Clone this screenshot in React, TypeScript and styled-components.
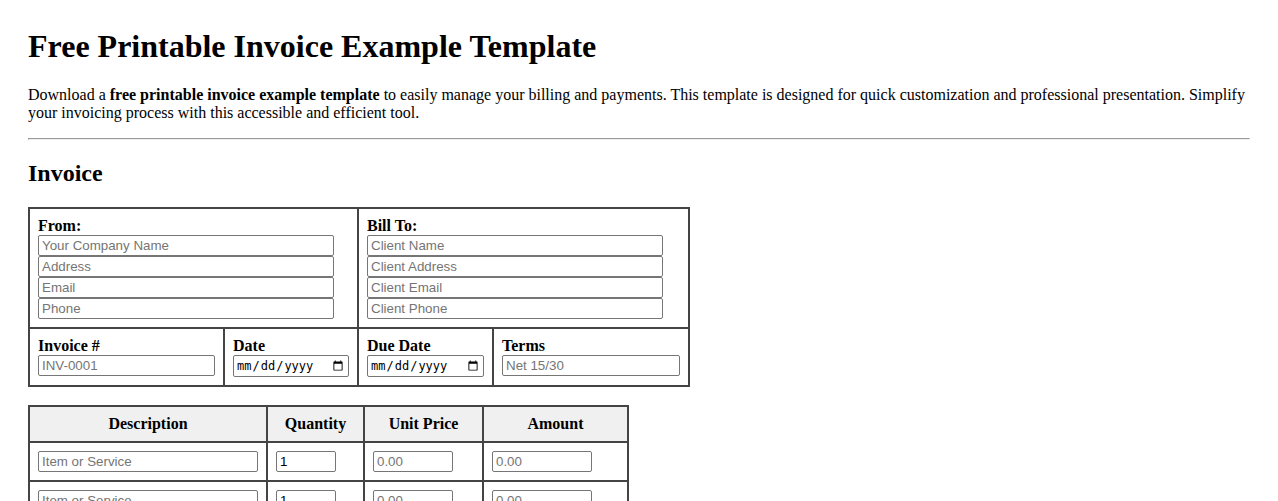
import styled, { createGlobalStyle } from "styled-components";

const GlobalStyle = createGlobalStyle`
body {
  margin: 8px;
  font-family: "Liberation Serif", "Times New Roman", serif;
  color: #000;
  background: #fff;
}
`

const Page = styled.div`
padding: 20px;
`

const Title = styled.h1`
margin: 0 0 21px;
font-size: 32px;
`

const Intro = styled.p`
margin: 0 0 16px;
font-size: 16px;
`

const Rule = styled.hr`
margin: 0;
`

const Heading = styled.h2`
margin: 20px 0;
font-size: 24px;
`

const Grid = styled.table<{ $width: number }>`
width: ${p => p.$width}px;
table-layout: fixed;
border-collapse: collapse;
border: 2px solid #444;
margin-bottom: 18px;
`

const Cell = styled.td`
border: 2px solid #444;
padding: 8px;
vertical-align: top;
text-align: left;
`

const HeadCell = styled.th`
border: 2px solid #444;
padding: 8px;
background: #f0f0f0;
font-weight: bold;
text-align: center;
`

const Label = styled.div`
font-weight: bold;
font-size: 16px;
`

const Field = styled.input<{ $width?: number }>`
display: block;
box-sizing: border-box;
width: ${p => (p.$width ? `${p.$width}px` : "100%")};
height: 21px;
margin: 0;
padding: 1px 3px;
border: 1px solid #767676;
border-radius: 2px;
font-family: "Liberation Sans", Arial, sans-serif;
font-size: 13.33px;
color: #000;
&::placeholder {
  color: #757575;
}
`

const DateField = styled(Field)`
font-family: "DejaVu Sans Mono", "Liberation Mono", monospace;
font-size: 12px;
height: 22px;
padding: 1px 2px;
`

type Party = { label: string; fields: string[] };

const parties: Party[] = [
  { label: "From:", fields: ["Your Company Name", "Address", "Email", "Phone"] },
  { label: "Bill To:", fields: ["Client Name", "Client Address", "Client Email", "Client Phone"] },
];

const items = [1, 2, 3];

const App = () => {
  return (
    <Page>
      <GlobalStyle />
      <Title>Free Printable Invoice Example Template</Title>
      <Intro>
        Download a <strong>free printable invoice example template</strong> to easily manage your billing and
        payments. This template is designed for quick customization and professional presentation. Simplify your
        invoicing process with this accessible and efficient tool.
      </Intro>
      <Rule />
      <Heading>Invoice</Heading>

      <Grid $width={660}>
        <colgroup>
          <col style={{ width: 195 }} />
          <col style={{ width: 134 }} />
          <col style={{ width: 135 }} />
          <col style={{ width: 196 }} />
        </colgroup>
        <tbody>
          <tr>
            {parties.map(party => (
              <Cell key={party.label} colSpan={2}>
                <Label>{party.label}</Label>
                {party.fields.map(f => (
                  <Field key={f} type="text" placeholder={f} $width={296} />
                ))}
              </Cell>
            ))}
          </tr>
          <tr>
            <Cell>
              <Label>Invoice #</Label>
              <Field type="text" placeholder="INV-0001" />
            </Cell>
            <Cell>
              <Label>Date</Label>
              <DateField type="date" />
            </Cell>
            <Cell>
              <Label>Due Date</Label>
              <DateField type="date" />
            </Cell>
            <Cell>
              <Label>Terms</Label>
              <Field type="text" placeholder="Net 15/30" />
            </Cell>
          </tr>
        </tbody>
      </Grid>

      <Grid $width={599}>
        <colgroup>
          <col style={{ width: 238 }} />
          <col style={{ width: 97 }} />
          <col style={{ width: 119 }} />
          <col style={{ width: 145 }} />
        </colgroup>
        <thead>
          <tr>
            <HeadCell>Description</HeadCell>
            <HeadCell>Quantity</HeadCell>
            <HeadCell>Unit Price</HeadCell>
            <HeadCell>Amount</HeadCell>
          </tr>
        </thead>
        <tbody>
          {items.map(i => (
            <tr key={i}>
              <Cell>
                <Field type="text" placeholder="Item or Service" $width={220} />
              </Cell>
              <Cell>
                <Field type="number" defaultValue={1} $width={60} />
              </Cell>
              <Cell>
                <Field type="text" placeholder="0.00" $width={80} />
              </Cell>
              <Cell>
                <Field type="text" placeholder="0.00" $width={100} />
              </Cell>
            </tr>
          ))}
        </tbody>
      </Grid>
    </Page>
  );
};

export default App;
